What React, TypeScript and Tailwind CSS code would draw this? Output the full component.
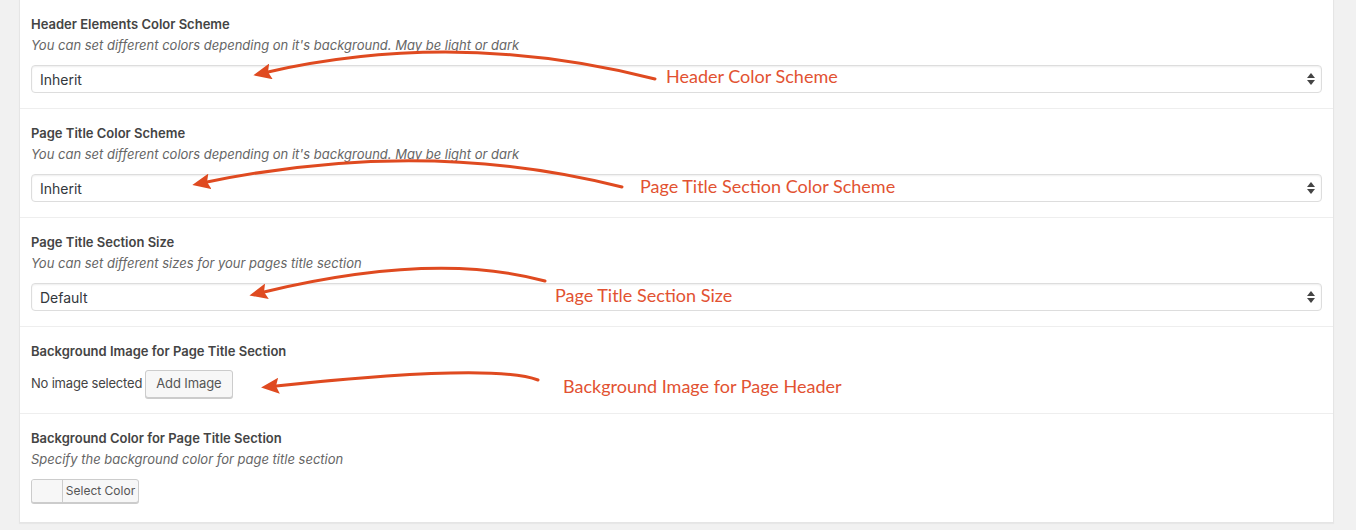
const ui = { fontFamily: 'Inter, "Noto Sans", "Liberation Sans", sans-serif' };
const lato = { fontFamily: 'Lato, "Open Sans", "Liberation Sans", sans-serif' };

function SelectBox({ value }: { value: string }) {
    return (
        <div className="mt-[11px] h-[28px] flex items-center justify-between rounded-[4px] border border-[#dddddd] bg-white pl-[8px] pr-[6px] shadow-[inset_0_1px_2px_rgba(0,0,0,0.07)]">
            <span className="text-[14px] text-[#32373c]">{value}</span>
            <svg width="8" height="12" viewBox="0 0 8 12">
                <path d="M4 0 L8 5 L0 5 Z" fill="#444" />
                <path d="M0 7 L8 7 L4 12 Z" fill="#444" />
            </svg>
        </div>
    );
}

function Title({ children }: { children: string }) {
    return <h3 className="h-[18px] leading-[18px] text-[13px] font-semibold text-[#444444]">{children}</h3>;
}

function Desc({ children }: { children: string }) {
    return <p className="mt-[3px] h-[18px] leading-[18px] text-[13px] italic text-[#666666]">{children}</p>;
}

export default function App() {
    return (
        <div className="relative min-h-screen bg-[#f1f1f1] pl-[19px] pr-[22px]" style={ui}>
            <div className="-mt-px border border-[#e5e5e5] bg-white shadow-[0_1px_1px_rgba(0,0,0,0.04)]">
                <div className="px-[11px] pt-[15px] pb-[15px] border-b border-[#eeeeee]">
                    <Title>Header Elements Color Scheme</Title>
                    <Desc>You can set different colors depending on it's background. May be light or dark</Desc>
                    <SelectBox value="Inherit" />
                </div>
                <div className="px-[11px] pt-[15px] pb-[15px] border-b border-[#eeeeee]">
                    <Title>Page Title Color Scheme</Title>
                    <Desc>You can set different colors depending on it's background. May be light or dark</Desc>
                    <SelectBox value="Inherit" />
                </div>
                <div className="px-[11px] pt-[15px] pb-[15px] border-b border-[#eeeeee]">
                    <Title>Page Title Section Size</Title>
                    <Desc>You can set different sizes for your pages title section</Desc>
                    <SelectBox value="Default" />
                </div>
                <div className="px-[11px] pt-[15px] pb-[15px] border-b border-[#eeeeee]">
                    <Title>Background Image for Page Title Section</Title>
                    <div className="mt-[10px] flex items-center gap-[3px]">
                        <span className="text-[13px] tracking-[-0.2px] text-[#444444]">No image selected</span>
                        <button className="h-[28px] px-[10px] rounded-[3px] border border-[#cccccc] bg-[#f7f7f7] text-[13px] tracking-[-0.1px] text-[#555555] shadow-[0_1px_0_#cccccc]">
                            Add Image
                        </button>
                    </div>
                </div>
                <div className="px-[11px] pt-[15px] pb-[19px]">
                    <Title>Background Color for Page Title Section</Title>
                    <Desc>Specify the background color for page title section</Desc>
                    <div className="mt-[11px] flex h-[24px] w-[108px] rounded-[3px] border border-[#cccccc] bg-[#f7f7f7] shadow-[0_1px_0_#cccccc] overflow-hidden">
                        <div className="w-[31px] border-r border-[#cccccc] bg-[#f7f7f7]" />
                        <span className="flex-1 flex items-center justify-center text-[12px] text-[#555555]">Select Color</span>
                    </div>
                </div>
            </div>

            {/* annotations */}
            <svg className="absolute inset-0 pointer-events-none" width="1356" height="531">
                <defs>
                    <marker id="head" markerUnits="userSpaceOnUse" markerWidth="18" markerHeight="16" viewBox="0 0 18 16" refX="3" refY="8" orient="auto">
                        <path d="M0 0 L18 8 L0 16 L3 8 Z" fill="#df4a20" />
                    </marker>
                </defs>
                <g fill="none" stroke="#df4a20" strokeWidth="3" strokeLinecap="round">
                    <path d="M655 80 Q458 30 268 73" markerEnd="url(#head)" />
                    <path d="M622 188 Q425 138 207 183" markerEnd="url(#head)" />
                    <path d="M545 282 Q435 252 264 293" markerEnd="url(#head)" />
                    <path d="M538 381 Q493 364 276 387" markerEnd="url(#head)" />
                </g>
            </svg>
            <div className="absolute left-[666px] top-[65px] text-[18px] leading-[24px] text-[#e25232]" style={lato}>Header Color Scheme</div>
            <div className="absolute left-[640px] top-[175px] text-[18px] leading-[24px] text-[#e25232]" style={lato}>Page Title Section Color Scheme</div>
            <div className="absolute left-[555px] top-[284px] text-[18px] leading-[24px] text-[#e25232]" style={lato}>Page Title Section Size</div>
            <div className="absolute left-[563px] top-[375px] text-[18px] leading-[24px] text-[#e25232]" style={lato}>Background Image for Page Header</div>
        </div>
    );
}
